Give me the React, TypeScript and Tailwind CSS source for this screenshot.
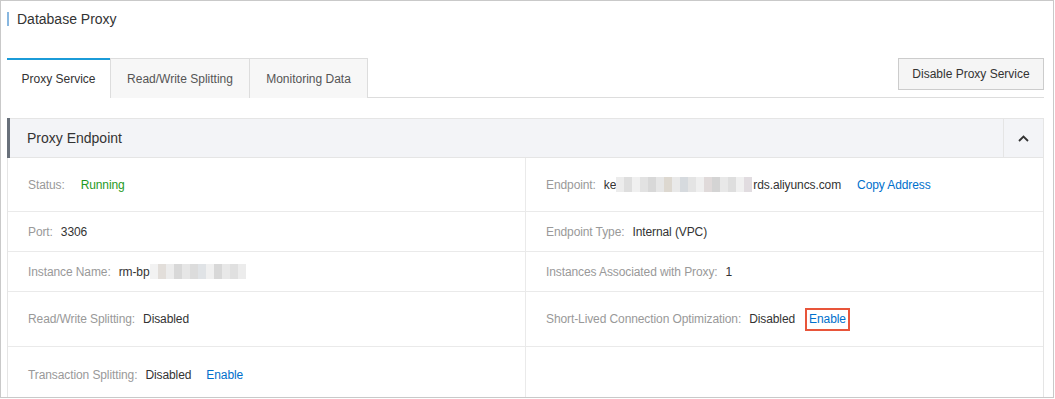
const font = { fontFamily: '"Liberation Sans", Arial, sans-serif' };

function Blur({ cells }: { cells: string[] }) {
  return (
    <span className="inline-flex h-[15px] align-middle">
      {cells.map((c, i) => (
        <span key={i} className="h-full w-[8px]" style={{ backgroundColor: c }} />
      ))}
    </span>
  );
}

function Field({
  label,
  gap = "ml-[8px]",
  children,
}: {
  label: string;
  gap?: string;
  children: React.ReactNode;
}) {
  return (
    <div className="flex items-center text-[12px] tracking-[-0.1px]">
      <span className="text-[#999]">{label}</span>
      <span className={`${gap} flex items-center text-[#333]`}>{children}</span>
    </div>
  );
}

const endpointBlur = [
  "#ececec", "#dedede", "#f0f0f0", "#e2e2e2", "#d8d8d8", "#e6e6e6", "#ddd8d0",
  "#e9e9e9", "#d6dade", "#e4e4e4", "#efefef", "#e0dada", "#d4d4d4", "#e8e8e8",
  "#dedede", "#f0f0f0", "#e1dce0",
];
const instanceBlur = [
  "#f2f2f2", "#e2deda", "#ececec", "#d8d8d8", "#e6e6e6", "#dcdcdc", "#e0e3e6",
  "#f0f0f0", "#d8d8d8", "#e8e8e8", "#e0e0e0", "#ececec",
];

export default function App() {
  return (
    <div
      className="w-[1054px] h-[398px] overflow-hidden border border-[#c9c9c9] bg-white pl-[6px] pr-[9px]"
      style={font}
    >
      <div className="mt-[11px] flex h-[14px] items-center">
        <span className="h-[14px] w-[2px] bg-[#88b7e0]" />
        <span className="ml-[8px] text-[14px] text-[#333]">Database Proxy</span>
      </div>

      <div className="mt-[32px] flex h-[40px] items-start border-b border-[#ddd]">
        <div className="flex h-[40px] w-[103px] items-center justify-center border-t-2 border-[#1b9bd8] bg-white text-[12px] text-[#333] -mb-px">
          Proxy Service
        </div>
        <div className="flex h-[40px] w-[140px] items-center justify-center border border-b-0 border-[#ddd] bg-[#f7f7f7] text-[12px] text-[#555]">
          Read/Write Splitting
        </div>
        <div className="flex h-[40px] w-[118px] items-center justify-center border border-b-0 border-l-0 border-[#ddd] bg-[#f7f7f7] text-[12px] text-[#555]">
          Monitoring Data
        </div>
        <button className="ml-auto flex h-[32px] w-[146px] items-center justify-center border border-[#ccc] bg-[#f5f5f5] text-[12px] text-[#333]">
          Disable Proxy Service
        </button>
      </div>

      <div className="mt-[20px] border-x border-[#e5e5e5]">
        <div className="flex h-[40px] items-center border-y border-[#e5e5e5] bg-[#f3f4f7]">
          <span className="h-[40px] w-[3px] -ml-px bg-[#68707a]" />
          <span className="ml-[17px] text-[14px] text-[#333]">Proxy Endpoint</span>
          <span className="ml-auto flex h-full w-[40px] items-center justify-center border-l border-[#e5e5e5]">
            <svg width="11" height="7" viewBox="0 0 11 7" fill="none">
              <path d="M1 6 L5.5 1.5 L10 6" stroke="#333" strokeWidth="1.8" />
            </svg>
          </span>
        </div>

        <div className="grid grid-cols-[518px_1fr]">
          <div className="flex h-[54px] items-center border-b border-r border-[#eaeaea] pl-[20px]">
            <Field label="Status:" gap="ml-[16px]">
              <span className="text-[#1f9a1f]">Running</span>
            </Field>
          </div>
          <div className="flex h-[54px] items-center border-b border-[#eaeaea] pl-[20px]">
            <Field label="Endpoint:">
              ke
              <Blur cells={endpointBlur} />
              <span className="ml-[1px]">rds.aliyuncs.com</span>
              <span className="ml-[16px] text-[#0070cc]">Copy Address</span>
            </Field>
          </div>

          <div className="flex h-[40px] items-center border-b border-r border-[#eaeaea] pl-[20px]">
            <Field label="Port:">3306</Field>
          </div>
          <div className="flex h-[40px] items-center border-b border-[#eaeaea] pl-[20px]">
            <Field label="Endpoint Type:">Internal (VPC)</Field>
          </div>

          <div className="flex h-[40px] items-center border-b border-r border-[#eaeaea] pl-[20px]">
            <Field label="Instance Name:">
              rm-bp
              <Blur cells={instanceBlur} />
            </Field>
          </div>
          <div className="flex h-[40px] items-center border-b border-[#eaeaea] pl-[20px]">
            <Field label="Instances Associated with Proxy:">1</Field>
          </div>

          <div className="flex h-[55px] items-center border-b border-r border-[#eaeaea] pl-[20px]">
            <Field label="Read/Write Splitting:">Disabled</Field>
          </div>
          <div className="flex h-[55px] items-center border-b border-[#eaeaea] pl-[20px]">
            <Field label="Short-Lived Connection Optimization:">
              Disabled
              <span className="ml-[10px] flex h-[23px] items-center border-2 border-[#e8553a] px-[2px] text-[#0070cc]">
                Enable
              </span>
            </Field>
          </div>

          <div className="flex h-[55px] items-center border-r border-[#eaeaea] pl-[20px]">
            <Field label="Transaction Splitting:">
              Disabled
              <span className="ml-[15px] text-[#0070cc]">Enable</span>
            </Field>
          </div>
          <div className="h-[55px]" />
        </div>
      </div>
    </div>
  );
}
